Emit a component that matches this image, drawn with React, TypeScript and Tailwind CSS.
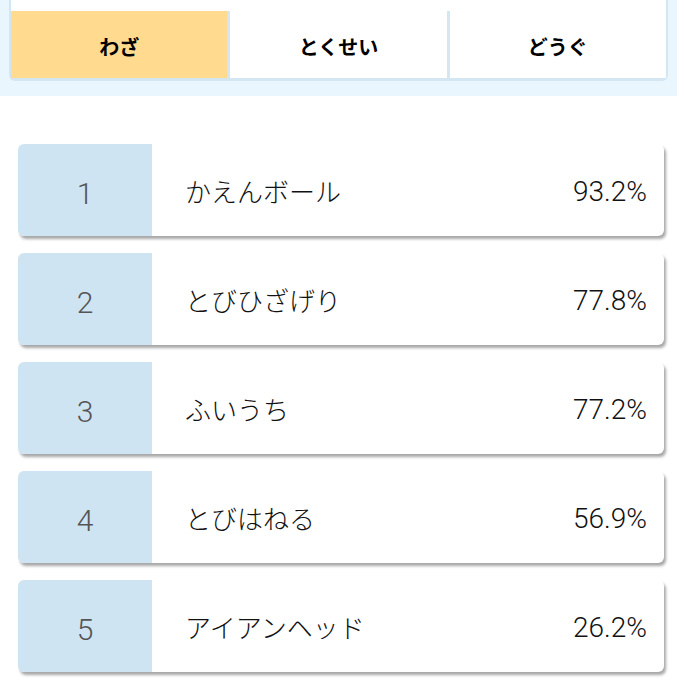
import React, { useState } from "react";

const tabs = ["わざ", "とくせい", "どうぐ"];

const rows = [
  { rank: 1, name: "かえんボール", rate: "93.2%" },
  { rank: 2, name: "とびひざげり", rate: "77.8%" },
  { rank: 3, name: "ふいうち", rate: "77.2%" },
  { rank: 4, name: "とびはねる", rate: "56.9%" },
  { rank: 5, name: "アイアンヘッド", rate: "26.2%" },
];

const App = () => {
  const [active, setActive] = useState(0);

  return (
    <div
      className="w-[677px] h-[680px] overflow-hidden bg-white"
      style={{ fontFamily: '"Noto Sans CJK JP", "Noto Sans", sans-serif' }}
    >
      {/* Tab bar */}
      <div className="bg-[#eaf6fd] px-[9px] pb-[15px]">
        <div className="bg-white border-x-2 border-b-[3px] border-[#d3e6f1] rounded-b-[6px] pt-[11px]">
          <div className="flex">
            {tabs.map((tab, i) => (
              <button
                key={tab}
                onClick={() => setActive(i)}
                className={`flex-1 h-[67px] pt-[4px] flex items-center justify-center text-[20px] font-bold text-black ${
                  i > 0 ? "border-l-[3px] border-[#d3e6f1]" : ""
                } ${active === i ? "bg-[#ffda8f]" : "bg-white"}`}
              >
                {tab}
              </button>
            ))}
          </div>
        </div>
      </div>

      {/* Ranking */}
      <div className="flex flex-col gap-[17px] pl-[18px] pr-[13px] pt-[48px]">
        {rows.map((row) => (
          <div
            key={row.rank}
            className="flex h-[92px] rounded-[6px] overflow-hidden bg-white shadow-[2px_3px_3px_rgba(0,0,0,0.35)]"
          >
            <div
              className="w-[134px] bg-[#cfe4f2] flex items-center justify-center pt-[6px] text-[30px] font-light text-[#555]"
              style={{ fontFamily: 'Roboto, sans-serif' }}
            >
              {row.rank}
            </div>
            <div className="flex-1 flex items-center justify-between pl-[33px] pr-[17px]">
              <span className="text-[26px] font-light text-[#111]">{row.name}</span>
              <span
                className="pt-[3px] text-[28px] font-light text-[#111]"
                style={{ fontFamily: 'Roboto, sans-serif' }}
              >
                {row.rate}
              </span>
            </div>
          </div>
        ))}
      </div>
    </div>
  );
};

export default App;
